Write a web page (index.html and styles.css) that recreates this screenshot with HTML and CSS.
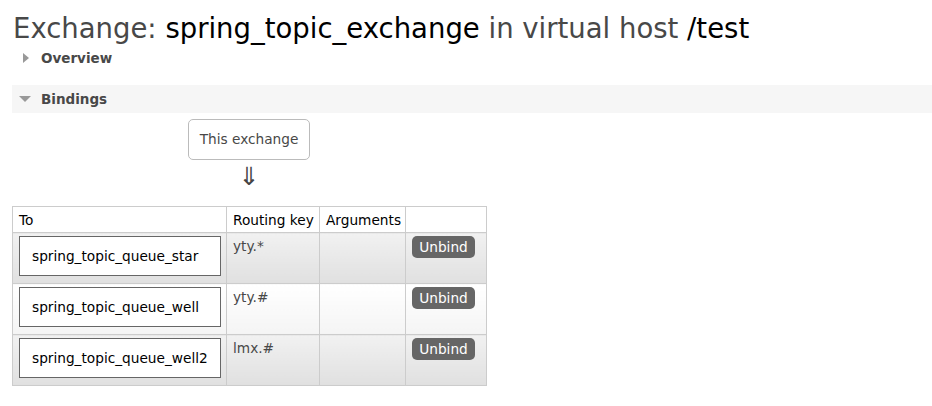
FILE: index.html
```html
<!DOCTYPE html>
<html>
<head>
<meta charset="utf-8">
<link rel="stylesheet" href="styles.css">
</head>
<body>
<h1 class="title">Exchange: <b>spring_topic_exchange</b> in virtual host <b>/test</b></h1>
<div class="section collapsed">
  <h2 class="section-head"><span class="tri tri-right"></span>Overview</h2>
</div>
<div class="section open">
  <h2 class="section-head"><span class="tri tri-down"></span>Bindings</h2>
  <div class="section-body">
    <div class="diagram">
      <div class="this-ex">This exchange</div>
      <div class="arrow">⇓</div>
    </div>
    <table class="bindings">
      <colgroup>
        <col class="c-to"><col class="c-key"><col class="c-args"><col class="c-act">
      </colgroup>
      <thead>
        <tr><th>To</th><th>Routing key</th><th>Arguments</th><th></th></tr>
      </thead>
      <tbody>
        <tr class="alt1">
          <td><div class="queue">spring_topic_queue_star</div></td>
          <td class="key">yty.*</td><td></td>
          <td><button class="unbind">Unbind</button></td>
        </tr>
        <tr class="alt2">
          <td><div class="queue">spring_topic_queue_well</div></td>
          <td class="key">yty.#</td><td></td>
          <td><button class="unbind">Unbind</button></td>
        </tr>
        <tr class="alt1">
          <td><div class="queue">spring_topic_queue_well2</div></td>
          <td class="key">lmx.#</td><td></td>
          <td><button class="unbind">Unbind</button></td>
        </tr>
      </tbody>
    </table>
  </div>
</div>
</body>
</html>
```
FILE: styles.css
```css
html, body { margin: 0; padding: 0; background: #fff; }
body {
  font-family: "DejaVu Sans", Verdana, sans-serif;
  font-size: 13.7px;
  color: #484848;
  padding: 0 0 0 12px;
}
.title {
  margin: 0;
  padding: 13px 0 0 1px;
  height: 31px;
  font-weight: normal;
  font-size: 27.5px;
  line-height: 30px;
  color: #484848;
}
.title b { font-weight: normal; color: #000; }
.section-head {
  margin: 0;
  font-size: 13.5px;
  font-weight: bold;
  height: 28px;
  line-height: 28px;
  display: flex;
  align-items: center;
  color: #484848;
}
.collapsed .section-head { padding-left: 11px; margin-bottom: 13px; }
.open .section-head { background: #f6f6f6; padding-left: 7px; }
.tri { display: inline-block; width: 0; height: 0; }
.tri-right {
  border-top: 5px solid transparent;
  border-bottom: 5px solid transparent;
  border-left: 6px solid #999;
  margin-right: 12px;
}
.tri-down {
  border-left: 6px solid transparent;
  border-right: 6px solid transparent;
  border-top: 6px solid #999;
  margin-right: 10px;
}
.diagram {
  width: 474px;
  display: flex;
  flex-direction: column;
  align-items: center;
  padding-top: 6px;
}
.this-ex {
  border: 1px solid #bbb;
  border-radius: 5px;
  width: 120px;
  height: 39px;
  line-height: 39px;
  text-align: center;
  color: #484848;
}
.arrow {
  font-size: 25px;
  line-height: 26px;
  margin-top: 4px;
  color: #444;
}
table.bindings {
  margin-top: 16px;
  border-collapse: collapse;
  border: 1px solid #ccc;
  table-layout: fixed;
  width: 474px;
}
.c-to { width: 214px; }
.c-key { width: 93px; }
.c-args { width: 86px; }
.c-act { width: 81px; }
.bindings th {
  font-weight: normal;
  text-align: left;
  color: #000;
  height: 25px;
  padding: 0 6px;
  border: 1px solid #ccc;
  vertical-align: middle;
  white-space: nowrap;
}
.bindings td {
  border: 1px solid #ccc;
  vertical-align: top;
  padding: 3px 6px;
  height: 44px;
}
.alt1 td { background: linear-gradient(#f1f1f1, #e0e0e0); }
.alt2 td { background: linear-gradient(#ffffff, #f4f4f4); }
.bindings td.key { padding: 5px 6px 1px; color: #484848; }
.queue {
  border: 1px solid #666;
  background: #fff;
  width: 200px;
  height: 38px;
  line-height: 38px;
  text-indent: 12px;
  color: #000;
  white-space: nowrap;
}
.unbind {
  font-family: inherit;
  font-size: 13.7px;
  background: #666;
  color: #fff;
  border: 0;
  border-radius: 5px;
  width: 63px;
  height: 22px;
  padding: 0;
  cursor: pointer;
}
```
